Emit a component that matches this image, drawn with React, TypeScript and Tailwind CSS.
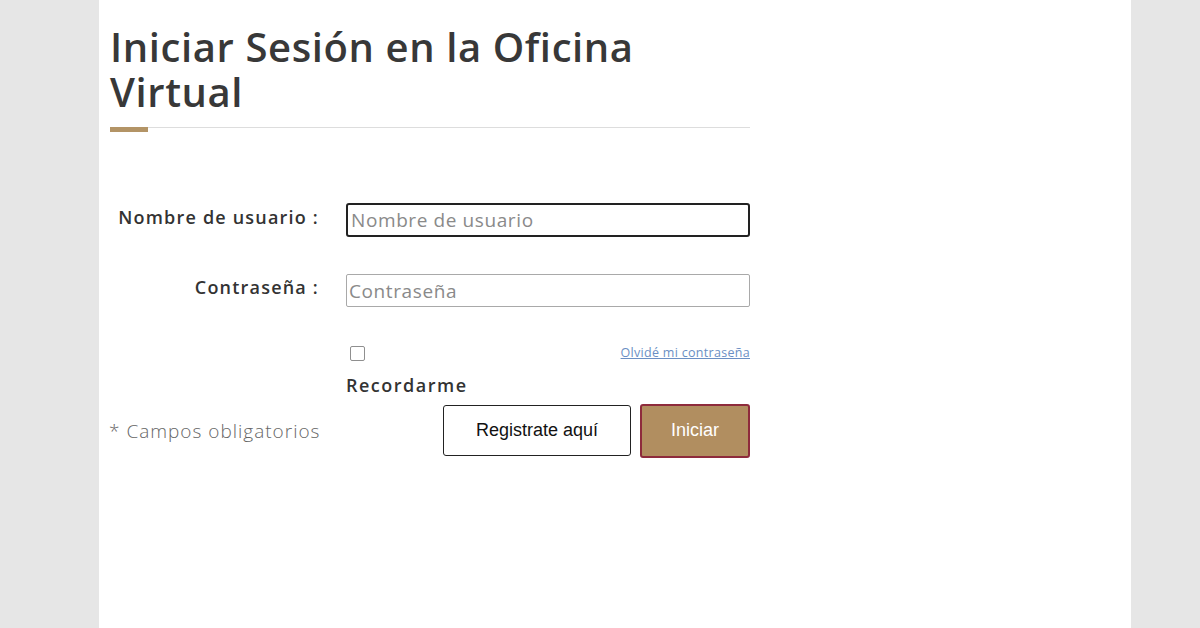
import React from 'react';

const sans = { fontFamily: '"Open Sans", "DejaVu Sans", sans-serif' };

export default function App() {
  return (
    <div className="min-h-[628px] w-[1200px] bg-[#e6e6e6]">
      <div className="ml-[99px] min-h-[628px] w-[1032px] bg-white px-[11px] pt-[24px] font-['Open_Sans',sans-serif]">
        <div className="w-[640px]">
          <h1 className="text-[40px] font-semibold leading-[45px] text-[#383838] tracking-[0.6px]">
            Iniciar Sesión en la Oficina
            <br />
            Virtual
          </h1>
          <div className="relative mt-[13px] h-px bg-[#dddddd]">
            <div className="absolute left-0 top-0 h-[5px] w-[38px] bg-[#b39466]" />
          </div>

          <form className="mt-[75px]" onSubmit={(e) => e.preventDefault()}>
            <div className="grid grid-cols-[209px_404px] gap-x-[27px] items-center">
              <label className="text-right text-[18px] font-semibold tracking-[1.2px] text-[#333333] -mt-[6px]">
                Nombre de usuario :
              </label>
              <input
                autoFocus
                placeholder="Nombre de usuario"
                className="h-[34px] rounded-[3px] border-2 border-[#222222] px-[3px] text-[19px] tracking-[0.6px] text-[#333] outline-none placeholder:text-[#8a8a8a]"
                style={sans}
              />
            </div>

            <div className="mt-[37px] grid grid-cols-[209px_404px] gap-x-[27px] items-center">
              <label className="text-right text-[18px] font-semibold tracking-[1.2px] text-[#333333] -mt-[6px]">
                Contraseña :
              </label>
              <input
                type="password"
                placeholder="Contraseña"
                className="h-[33px] rounded-[2px] border border-[#a9a9a9] px-[2px] text-[19px] tracking-[0.6px] text-[#333] outline-none placeholder:text-[#8a8a8a]"
                style={sans}
              />
            </div>

            <div className="mt-[37px] ml-[236px] w-[404px]">
              <div className="flex items-center justify-between">
                <input
                  type="checkbox"
                  className="ml-[4px] h-[15px] w-[15px] appearance-none rounded-[2px] border border-[#8f8f8f] bg-white"
                />
                <a href="#" className="text-[12.5px] tracking-[0.3px] text-[#6b8fc4] underline">
                  Olvidé mi contraseña
                </a>
              </div>
              <div className="mt-[9px] text-[18px] font-semibold tracking-[1.5px] text-[#333333]">
                Recordarme
              </div>
            </div>

            <div className="mt-[5px] flex items-center">
              <span className="-ml-px flex-1 text-[19px] font-light tracking-[1px] text-[#666666]">
                * Campos obligatorios
              </span>
              <button
                type="button"
                className="h-[51px] w-[188px] rounded-[3px] border border-[#222222] bg-white text-[18px] text-[#111] font-['Liberation_Sans',Arial,sans-serif]"
              >
                Registrate aquí
              </button>
              <button
                type="submit"
                className="ml-[9px] h-[54px] w-[110px] rounded-[3px] border-2 border-[#8e2b3c] bg-[#b18e60] text-[18px] text-white font-['Liberation_Sans',Arial,sans-serif]"
              >
                Iniciar
              </button>
            </div>
          </form>
        </div>
      </div>
    </div>
  );
}
